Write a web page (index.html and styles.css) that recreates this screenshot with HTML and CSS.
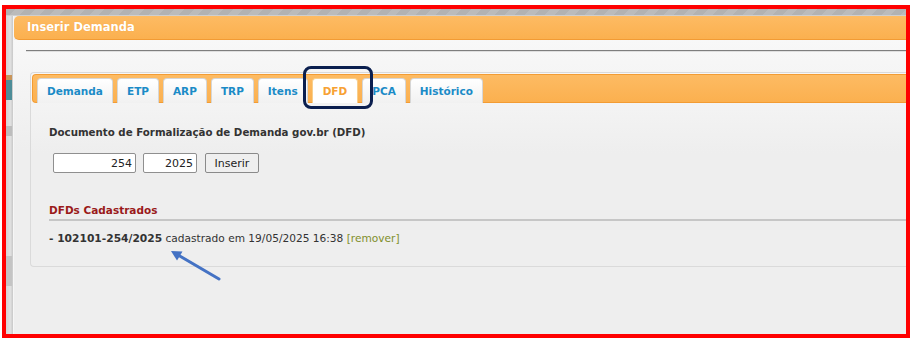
FILE: index.html
```html
<!DOCTYPE html>
<html lang="pt-BR">
<head>
  <meta charset="UTF-8">
  <title>Inserir Demanda</title>
  <link rel="stylesheet" href="styles.css">
</head>
<body>
  <div class="Frame">
    <div class="Frame-Stripe"></div>
    <div class="Frame-Layout">
      <div class="Side">
        <div class="Side-Mark Side-Mark--orange"></div>
        <div class="Side-Mark Side-Mark--teal"></div>
        <div class="Side-Mark Side-Mark--gray1"></div>
        <div class="Side-Mark Side-Mark--gray2"></div>
      </div>

      <div class="Window">
        <div class="Window-Head">Inserir Demanda</div>
        <div class="Window-Body">
          <div class="Window-Rule"></div>

          <div class="Tabs">
            <ul class="Tabs-Nav">
              <li class="Tabs-Item">Demanda</li>
              <li class="Tabs-Item">ETP</li>
              <li class="Tabs-Item">ARP</li>
              <li class="Tabs-Item">TRP</li>
              <li class="Tabs-Item">Itens</li>
              <li class="Tabs-Item Tabs-Item--active">DFD</li>
              <li class="Tabs-Item">PCA</li>
              <li class="Tabs-Item">Histórico</li>
            </ul>

            <div class="Tabs-Panel">
              <div class="Panel-Title">Documento de Formalização de Demanda gov.br (DFD)</div>

              <div class="Panel-Form">
                <input class="Panel-Input Panel-Input--num" type="text" value="254">
                <input class="Panel-Input Panel-Input--year" type="text" value="2025">
                <button class="Panel-Button">Inserir</button>
              </div>

              <div class="Panel-Heading">DFDs Cadastrados</div>
              <div class="Panel-Row">
                <b>- 102101-254/2025</b> cadastrado em 19/05/2025 16:38 <span class="Panel-Remove">[remover]</span>
              </div>
            </div>
          </div>
        </div>
      </div>
    </div>

    <!-- anotações -->
    <div class="Mark-Box"></div>
    <svg class="Mark-Arrow" width="60" height="40" viewBox="0 0 60 40">
      <line x1="12" y1="10" x2="53" y2="34" stroke="#4472c4" stroke-width="3" stroke-linecap="round" />
      <polygon points="5,6 16.5,6.6 11,15.6" fill="#4472c4" />
    </svg>
  </div>
</body>
</html>
```

FILE: styles.css
```css
* {
  margin: 0;
  padding: 0;
  box-sizing: border-box;
}

body {
  background-color: #ffffff;
  font-family: 'DejaVu Sans', Verdana, sans-serif;
  overflow: hidden;
}

.Frame {
  position: relative;
  margin: 5px 0 0 2px;
  width: 908px;
  height: 333px;
  border: 4px solid #ff0000;
  overflow: hidden;
  display: flex;
  flex-direction: column;
  background-color: #eeeeee;
}

.Frame-Stripe {
  height: 7px;
  flex-shrink: 0;
  background: repeating-linear-gradient(135deg, #b2b2b2 0 7px, #bbbbbb 7px 14px);
  border-bottom: 1px solid #cfcfcf;
}

.Frame-Layout {
  flex: 1;
  display: flex;
}

.Side {
  width: 7px;
  flex-shrink: 0;
  background: linear-gradient(90deg, #d6d6d6, #e2e2e2 60%, #c8c8c8);
  position: relative;
}

.Side-Mark {
  position: absolute;
  left: 0;
  width: 6px;
}

.Side-Mark--orange { top: 59px; height: 5px; background-color: #c8955a; }
.Side-Mark--teal { top: 64px; height: 20px; background-color: #4d8d98; }
.Side-Mark--gray1 { top: 110px; height: 10px; background-color: #bdbdbd; }
.Side-Mark--gray2 { top: 240px; height: 30px; background-color: #c4c4c4; }

.Window {
  flex: 1;
  display: flex;
  flex-direction: column;
  border-left: 1px solid #f6f6f6;
}

.Window-Head {
  height: 24px;
  line-height: 23px;
  padding-left: 13px;
  color: #ffffff;
  font-size: 11.5px;
  font-weight: bold;
  background: linear-gradient(#fdbb63, #fbb04f);
  border-bottom: 1px solid #f29b34;
  border-radius: 5px 0 0 5px;
  text-shadow: 0 0 1px #f0a040;
}

.Window-Body {
  flex: 1;
  padding: 10px 0 0 12px;
  background: linear-gradient(#f8f8f8, #eeeeee 110px);
}

.Window-Rule {
  border-top: 1px solid #7e7e7e;
  height: 2px;
  background: linear-gradient(#c8c8c8, #f6f6f6);
}

.Tabs {
  margin: 20px 0 0 4px;
  border: 1px solid #dadada;
  border-right: none;
  border-radius: 4px 0 0 4px;
  padding: 1px 0 0 1px;
  background: linear-gradient(#f7f7f7, #eeeeee 80px);
}

.Tabs-Nav {
  list-style: none;
  height: 29px;
  display: flex;
  align-items: flex-end;
  gap: 4px;
  padding-left: 4px;
  border: 1px solid #f39c33;
  border-right: none;
  border-radius: 4px 0 0 4px;
  background: linear-gradient(#fdbb63, #fbb04f);
}

.Tabs-Item {
  height: 25px;
  margin-bottom: -1px;
  padding: 0 9px;
  line-height: 24px;
  font-size: 10.5px;
  font-weight: bold;
  color: #1b8bc7;
  background: linear-gradient(#ffffff, #f1f1f1);
  border: 1px solid #d6d6d6;
  border-bottom: none;
  border-radius: 4px 4px 0 0;
}

.Tabs-Item--active {
  padding: 0 10px;
  color: #f7a134;
  background: #ffffff;
  border-color: #f8cf8c;
}

.Tabs-Panel {
  padding: 22px 0 20px 17px;
}

.Panel-Title {
  font-size: 10.25px;
  line-height: 14px;
  font-weight: bold;
  color: #333333;
}

.Panel-Form {
  display: flex;
  align-items: center;
  margin: 14px 0 0 4px;
}

.Panel-Input {
  height: 20px;
  border: 1px solid #8f8f8f;
  border-radius: 2px;
  background-color: #ffffff;
  font-family: 'DejaVu Sans', Verdana, sans-serif;
  font-size: 11px;
  color: #222222;
  text-align: right;
  padding: 0 3px;
}

.Panel-Input--num {
  width: 83px;
}

.Panel-Input--year {
  width: 54px;
  margin-left: 7px;
}

.Panel-Button {
  width: 54px;
  height: 20px;
  margin-left: 8px;
  border: 1px solid #8a8a8a;
  border-radius: 2px;
  background-color: #efefef;
  font-family: 'DejaVu Sans', Verdana, sans-serif;
  font-size: 11px;
  color: #222222;
}

.Panel-Heading {
  margin-top: 30px;
  padding-bottom: 2px;
  font-size: 10.5px;
  line-height: 14px;
  font-weight: bold;
  color: #9a1a1a;
  border-bottom: 2px solid #c6c6c6;
}

.Panel-Row {
  margin-top: 10px;
  font-size: 10.6px;
  line-height: 14px;
  color: #333333;
}

.Panel-Row b {
  font-size: 10.7px;
}

.Panel-Remove {
  color: #818f2c;
}

.Mark-Box {
  position: absolute;
  left: 297px;
  top: 57px;
  width: 70px;
  height: 43px;
  border: 3px solid #0b1f4f;
  border-radius: 8px;
}

.Mark-Arrow {
  position: absolute;
  left: 160px;
  top: 236px;
}
```
